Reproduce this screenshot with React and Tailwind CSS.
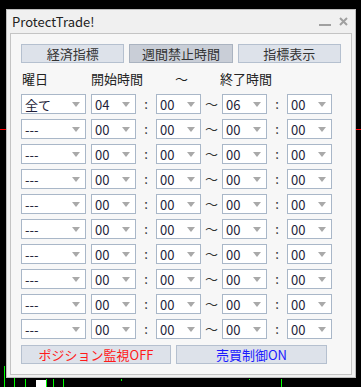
import React from 'react';

const FONT = { fontFamily: '"Noto Sans CJK JP", "Noto Sans", sans-serif' };

const rows = [
    { day: '全て', sh: '04', sm: '00', eh: '06', em: '00' },
    ...Array.from({ length: 9 }, () => ({ day: '---', sh: '00', sm: '00', eh: '00', em: '00' })),
];

// chart behind the window
const ChartBackdrop = () => (
    <svg className="absolute inset-0" width="361" height="387">
        <line x1="0" y1="129.5" x2="361" y2="129.5" stroke="#ff0000" strokeWidth="1" />
        <line x1="4.5" y1="366" x2="4.5" y2="387" stroke="#00ff00" />
        <line x1="14.5" y1="378" x2="14.5" y2="387" stroke="#00ff00" />
        <line x1="25.5" y1="379" x2="25.5" y2="387" stroke="#00ff00" />
        <rect x="36" y="380" width="10" height="7" fill="#ffffff" />
        <line x1="46.5" y1="379" x2="46.5" y2="387" stroke="#00ff00" />
        <line x1="53.5" y1="379" x2="53.5" y2="387" stroke="#00ff00" />
        <line x1="63.5" y1="379" x2="63.5" y2="387" stroke="#00ff00" />
        <line x1="121.5" y1="379" x2="121.5" y2="381" stroke="#00ff00" />
        <line x1="249.5" y1="379" x2="249.5" y2="380" stroke="#00ff00" />
        <line x1="281.5" y1="379" x2="281.5" y2="387" stroke="#00ff00" />
    </svg>
);

const Arrow = () => (
    <svg width="8" height="5" viewBox="0 0 8 5" className="shrink-0">
        <path d="M0 0 L8 0 L4 5 Z" fill="#a9a9a9" />
    </svg>
);

const Combo = ({ value, width }) => (
    <div className={`${width} h-[20px] bg-white border border-[#a9b7c8] flex items-center justify-between pl-[3px] pr-[5px]`}>
        <span className="text-[13px] leading-none text-[#1e1e3a]">{value}</span>
        <Arrow />
    </div>
);

const Sep = ({ children, width }) => (
    <div className={`${width} h-[20px] flex items-center justify-center text-[13px] text-[#333]`}>{children}</div>
);

const Button = ({ children, pressed, color = 'text-[#333]' }) => (
    <div className={`h-[19px] flex items-center justify-center border text-[13px] leading-none ${color} ${pressed ? 'bg-[#c9ced7] border-[#aab3c0]' : 'bg-[#dde2ea] border-[#b5c0cf]'}`}>
        {children}
    </div>
);

export default function App() {
    return (
        <div className="relative w-[361px] h-[387px] bg-black overflow-hidden" style={FONT}>
            <ChartBackdrop />

            {/* window */}
            <div className="relative ml-[6px] pt-[9px]">
                <div className="w-[350px] h-[369px] bg-[#f0f0f0] border border-[#bdbdbd] flex flex-col px-[3px] pb-[2px]">
                    {/* title bar */}
                    <div className="h-[23px] flex items-center justify-between pl-[2px] pr-[4px]">
                        <span className="text-[13px] text-[#222]">ProtectTrade!</span>
                        <div className="flex items-center gap-[8px] text-[#9a9a9a]">
                            <div className="w-[12px] h-[2px] bg-[#a0a0a0] mt-[6px]" />
                            <svg width="9" height="9" viewBox="0 0 9 9">
                                <path d="M1 1 L8 8 M8 1 L1 8" stroke="#a0a0a0" strokeWidth="2" />
                            </svg>
                        </div>
                    </div>

                    {/* panel */}
                    <div className="flex-1 bg-[#f7f7f7] border border-[#c4c4c4] pt-[10px] pl-[10px] pr-[10px]">
                        <div className="grid grid-cols-3 gap-[5px]">
                            <Button>経済指標</Button>
                            <Button pressed>週間禁止時間</Button>
                            <Button>指標表示</Button>
                        </div>

                        {/* headers */}
                        <div className="flex items-center h-[20px] mt-[6px] text-[13px] text-[#222]">
                            <span className="w-[70px] pl-[1px]">曜日</span>
                            <span className="w-[84px]">開始時間</span>
                            <span className="w-[45px]">～</span>
                            <span>終了時間</span>
                        </div>

                        {/* time rows */}
                        <div className="flex flex-col gap-[5px] mt-[5px]">
                            {rows.map((r, i) => (
                                <div key={i} className="flex items-center">
                                    <Combo value={r.day} width="w-[65px]" />
                                    <div className="w-[5px]" />
                                    <Combo value={r.sh} width="w-[45px]" />
                                    <Sep width="w-[20px]">:</Sep>
                                    <Combo value={r.sm} width="w-[45px]" />
                                    <Sep width="w-[21px]">～</Sep>
                                    <Combo value={r.eh} width="w-[45px]" />
                                    <Sep width="w-[20px]">:</Sep>
                                    <Combo value={r.em} width="w-[45px]" />
                                </div>
                            ))}
                        </div>

                        {/* toggles */}
                        <div className="flex gap-[5px] mt-[6px]">
                            <div className="w-[150px]"><Button color="text-[#ff1a1a]">ポジション監視OFF</Button></div>
                            <div className="w-[151px]"><Button color="text-[#1a1aff]">売買制御ON</Button></div>
                        </div>
                    </div>
                </div>
            </div>
        </div>
    );
}
